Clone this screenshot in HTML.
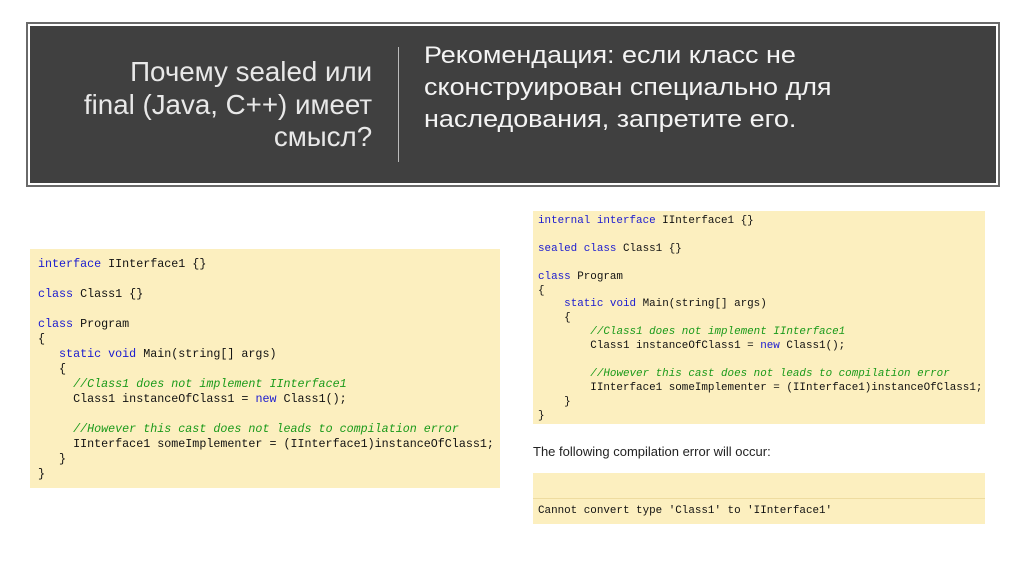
<!DOCTYPE html>
<html><head><meta charset="utf-8"><style>
body{margin:0;width:1024px;height:574px;background:#fff;position:relative;overflow:hidden;font-family:"Liberation Sans",sans-serif}
.hdr{position:absolute;left:26px;top:22px;width:970px;height:161px;background:#404040;border:2px solid #6a6a6a;box-shadow:inset 0 0 0 2px #fff}
.l{position:absolute;right:626px;top:32px;text-align:right;color:#e8e8e8;font-size:28px;line-height:32.5px;font-family:"Liberation Sans",sans-serif;font-weight:300;transform:scaleX(0.99);transform-origin:right;white-space:nowrap}
.div{position:absolute;left:370px;top:23px;width:1px;height:115px;background:#bbb}
.r{position:absolute;left:396px;top:16px;color:#f4f4f4;font-size:24.5px;line-height:32px;font-family:"Liberation Sans",sans-serif;white-space:nowrap;transform:scaleX(1.1);transform-origin:left}
pre{margin:0;position:absolute;background:#fcefbf;font-family:"Liberation Mono",monospace;color:#111}
.k{color:#1a1ad0}.c{color:#1a9a1a;font-style:italic}
</style></head><body>
<div class="hdr">
<div class="l">Почему sealed или<br>final (Java, C++) имеет<br>смысл?</div>
<div class="div"></div>
<div class="r">Рекомендация: если класс не<br>сконструирован специально для<br>наследования, запретите его.</div>
</div>
<pre style="left:30px;top:249px;width:462px;height:231px;padding:8px 0 0 8px;font-size:11.7px;line-height:15px"><span class="k">interface</span> IInterface1 {}

<span class="k">class</span> Class1 {}

<span class="k">class</span> Program
{
   <span class="k">static void</span> Main(string[] args)
   {
     <span class="c">//Class1 does not implement IInterface1</span>
     Class1 instanceOfClass1 = <span class="k">new</span> Class1();

     <span class="c">//However this cast does not leads to compilation error</span>
     IInterface1 someImplementer = (IInterface1)instanceOfClass1;
   }
}</pre>
<pre style="left:533px;top:211px;width:447px;height:209px;padding:4px 0 0 5px;font-size:10.9px;line-height:13.9px"><span class="k">internal interface</span> IInterface1 {}

<span class="k">sealed class</span> Class1 {}

<span class="k">class</span> Program
{
    <span class="k">static void</span> Main(string[] args)
    {
        <span class="c">//Class1 does not implement IInterface1</span>
        Class1 instanceOfClass1 = <span class="k">new</span> Class1();

        <span class="c">//However this cast does not leads to compilation error</span>
        IInterface1 someImplementer = (IInterface1)instanceOfClass1;
    }
}</pre>
<div style="position:absolute;left:533px;top:444px;font-size:13px;color:#222">The following compilation error will occur:</div>
<pre style="left:533px;top:473px;width:452px;height:51px;font-size:10.9px"><div style="height:25px;border-bottom:1px solid #eedca0"></div><div style="padding:6px 0 0 5px">Cannot convert type 'Class1' to 'IInterface1'</div></pre>
</body></html>
